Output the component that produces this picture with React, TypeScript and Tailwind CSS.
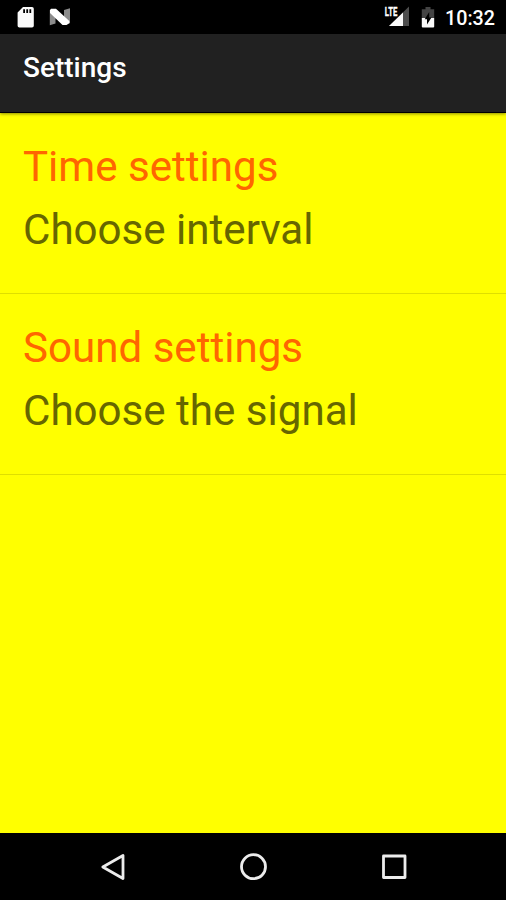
const settings = [
  { title: "Time settings", summary: "Choose interval" },
  { title: "Sound settings", summary: "Choose the signal" },
];

function SdCardIcon() {
  return (
    <svg width="17" height="21" viewBox="0 0 17 21">
      <path
        fillRule="evenodd"
        fill="#fafafa"
        d="M6 0h9a1.800 1.800 0 0 1 1.800 1.800v17a1.800 1.800 0 0 1-1.800 1.800H2.400A1.800 1.800 0 0 1 .6 18.800V5.600L6 0zM6.200 2.200v3.800h1.800v-3.800zM9.300 2.200v3.800h1.800v-3.800zM12.400 2.200v3.800h1.800v-3.800z"
      />
    </svg>
  );
}

function NougatIcon() {
  return (
    <svg width="22" height="18" viewBox="0 0 22 18">
      <path fill="#8c8c8c" d="M.8 2L6.500 5v10.500L.8 17.300zM15 2l6-1.700V15.500L15 12z" />
      <path fill="#fff" d="M2 .8h5L20.300 13v2.200L17.500 17h-4L1 5V2z" />
    </svg>
  );
}

function SignalIcon() {
  return (
    <svg width="28" height="24" viewBox="0 0 28 24">
      <path fill="#4d4d4d" d="M26 1.500v19.500H6z" />
      <path fill="#fafafa" d="M20 7.500v13.500H6z" />
      <path fill="#000" d="M0 0h14.500v12H0z" />
      <text
        x="1.800"
        y="10.800"
        fill="#fff"
        stroke="#fff"
        strokeWidth="0.300"
        fontSize="12.800"
        fontWeight="700"
        textLength="12.500"
        lengthAdjust="spacingAndGlyphs"
      >
        LTE
      </text>
    </svg>
  );
}

function BatteryIcon() {
  return (
    <svg width="14" height="21" viewBox="0 0 14 21">
      <path fill="#444" d="M4.500 0h5v2.300h3.700V11H.8V2.300h3.700z" />
      <path fill="#fafafa" d="M.8 11h12.400v8.500a1 1 0 0 1-1 1H1.800a1 1 0 0 1-1-1z" />
      <path fill="#000" d="M8.200 5v5.500h2.300L6 17.500v-5.200H3.700z" />
    </svg>
  );
}

export default function App() {
  return (
    <div className="flex h-[900px] w-[506px] flex-col overflow-hidden bg-[#ffff00] font-['Roboto',sans-serif]">
      <div className="flex h-[34px] shrink-0 items-center bg-black pr-[11px] pl-[17px] text-white">
        <SdCardIcon />
        <div className="ml-[15px]">
          <NougatIcon />
        </div>
        <div className="ml-auto flex items-center">
          <SignalIcon />
          <div className="ml-[10px]">
            <BatteryIcon />
          </div>
          <span className="ml-[10px] pt-[3px] text-[19.7px] leading-[22px] font-medium">10:32</span>
        </div>
      </div>

      <header className="z-10 flex h-[79px] shrink-0 items-center border-b border-black bg-[#212121] pb-[10px] pl-[23px] shadow-[0_1px_3px_rgba(0,0,0,0.45)]">
        <h1 className="text-[28px] leading-none font-medium text-white">Settings</h1>
      </header>

      <main className="flex-1">
        {settings.map((item) => (
          <div key={item.title} className="h-[181px] border-b border-[#dfdf00] pt-[22px] pl-[23px] text-[42.1px]">
            <div className="leading-[64px] text-[#ff6600]">{item.title}</div>
            <div className="leading-[62px] text-[#666600]">{item.summary}</div>
          </div>
        ))}
      </main>

      <nav className="flex h-[67px] shrink-0 items-center justify-between bg-black pr-[98px] pl-[99px]">
        <svg width="28" height="30" viewBox="0 0 28 30" fill="none" stroke="#ececec" strokeWidth="2.800" strokeLinejoin="round">
          <path d="M24 3.500v23L3.800 15z" />
        </svg>
        <svg width="30" height="30" viewBox="0 0 30 30" fill="none" stroke="#ececec" strokeWidth="2.800">
          <circle cx="14.500" cy="14.700" r="12" />
        </svg>
        <svg width="28" height="30" viewBox="0 0 28 30" fill="none" stroke="#ececec" strokeWidth="2.800" strokeLinejoin="round">
          <path d="M3.500 4h21.500v21.500H3.500z" />
        </svg>
      </nav>
    </div>
  );
}
